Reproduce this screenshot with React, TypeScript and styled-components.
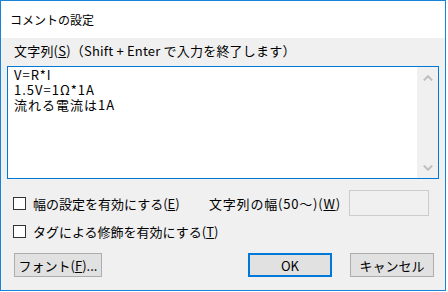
import React from "react";
import styled, { createGlobalStyle } from "styled-components";

const GlobalStyle = createGlobalStyle`
  html, body { margin: 0; padding: 0; background: #ffffff; }
  body { font-family: "Noto Sans CJK JP", "Noto Sans", sans-serif; }
  * { box-sizing: border-box; }
`;

const Window = styled.div`
  width: 446px;
  height: 291px;
  border: 1px solid #1883d7;
  background: #f0f0f0;
  display: flex;
  flex-direction: column;
  font-family: "Noto Sans CJK JP", sans-serif;
  font-size: 13px;
  line-height: 15px;
  color: #000;
`;

const TitleBar = styled.div`
  height: 37px;
  background: #ffffff;
  display: flex;
  align-items: center;
  padding-left: 9px;
  font-size: 12px;
`;

const Content = styled.div`
  flex: 1;
  display: flex;
  flex-direction: column;
  padding: 5px 6px 0 6px;
`;

const FieldLabel = styled.div`
  padding-left: 7px;
  height: 15px;
  white-space: nowrap;
  letter-spacing: 0.2px;
`;

const TextBox = styled.div`
  margin-top: 8px;
  height: 113px;
  border: 1px solid #0078d7;
  background: #ffffff;
  display: flex;
`;

const TextContent = styled.div`
  flex: 1;
  padding: 0 0 0 6px;
  white-space: pre;
  letter-spacing: 1px;
`;

const ScrollBar = styled.div`
  width: 21px;
  background: #f0f0f0;
  display: flex;
  flex-direction: column;
  justify-content: space-between;
`;

const ScrollArrow = styled.div<{ $h: number }>`
  height: ${(p) => p.$h}px;
  display: flex;
  align-items: center;
  justify-content: center;
`;

const OptionRow = styled.div<{ $top: number; $h: number }>`
  margin-top: ${(p) => p.$top}px;
  height: ${(p) => p.$h}px;
  display: flex;
  align-items: center;
  padding-left: 6px;
`;

const CheckGroup = styled.label<{ $w?: number }>`
  display: flex;
  align-items: center;
  gap: 7px;
  ${(p) => (p.$w ? `width: ${p.$w}px;` : "")}
  white-space: nowrap;
`;

const CheckBox = styled.span`
  width: 13px;
  height: 13px;
  border: 1px solid #333333;
  background: #ffffff;
  flex: none;
`;

const WidthLabel = styled.span`
  width: 133px;
  white-space: nowrap;
  letter-spacing: 0.8px;
`;

const WidthInput = styled.div`
  margin-left: 7px;
  width: 80px;
  height: 26px;
  border: 1px solid #cccccc;
  background: #f0f0f0;
`;

const ButtonRow = styled.div`
  margin-top: 14px;
  display: flex;
  align-items: center;
  padding: 0 5px 0 7px;
`;

const Button = styled.div<{ $w: number; $default?: boolean }>`
  width: ${(p) => p.$w}px;
  height: 24px;
  background: #e1e1e1;
  border: ${(p) => (p.$default ? "2px solid #0078d7" : "1px solid #adadad")};
  display: flex;
  align-items: center;
  justify-content: center;
  white-space: nowrap;
`;

const Spacer = styled.div`
  flex: 1;
`;

const ButtonGap = styled.div`
  width: 18px;
`;

const Chevron = ({ up }: { up?: boolean }) => (
  <svg width="10" height="6" viewBox="0 0 10 6">
    <path
      d={up ? "M0.8 5.4 L5 1.2 L9.2 5.4" : "M0.8 0.6 L5 4.8 L9.2 0.6"}
      fill="none"
      stroke="#bfbfbf"
      strokeWidth="2"
    />
  </svg>
);

export default function App() {
  return (
    <>
      <GlobalStyle />
      <Window>
        <TitleBar>コメントの設定</TitleBar>
        <Content>
          <FieldLabel>
            文字列(<u>S</u>)（Shift + Enter で入力を終了します）
          </FieldLabel>
          <TextBox>
            <TextContent>{"V=R*I\n1.5V=1Ω*1A\n流れる電流は1A"}</TextContent>
            <ScrollBar>
              <ScrollArrow $h={21}>
                <Chevron up />
              </ScrollArrow>
              <ScrollArrow $h={21}>
                <Chevron />
              </ScrollArrow>
            </ScrollBar>
          </TextBox>
          <OptionRow $top={11} $h={26}>
            <CheckGroup $w={196}>
              <CheckBox />
              <span>
                幅の設定を有効にする(<u>E</u>)
              </span>
            </CheckGroup>
            <WidthLabel>
              文字列の幅(50～)(<u>W</u>)
            </WidthLabel>
            <WidthInput />
          </OptionRow>
          <OptionRow $top={7} $h={16}>
            <CheckGroup>
              <CheckBox />
              <span>
                タグによる修飾を有効にする(<u>T</u>)
              </span>
            </CheckGroup>
          </OptionRow>
          <ButtonRow>
            <Button $w={88}>
              フォント(<u>F</u>)...
            </Button>
            <Spacer />
            <Button $w={84} $default>
              OK
            </Button>
            <ButtonGap />
            <Button $w={84}>キャンセル</Button>
          </ButtonRow>
        </Content>
      </Window>
    </>
  );
}
